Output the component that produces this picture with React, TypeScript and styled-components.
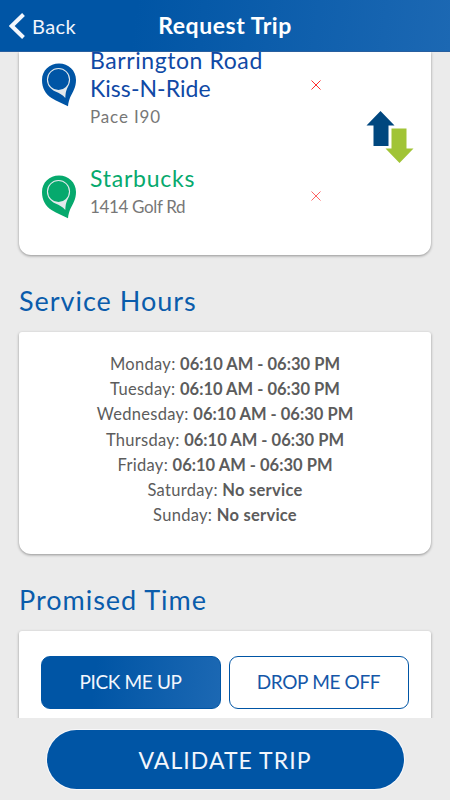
import React from 'react';
import styled, { createGlobalStyle } from 'styled-components';

const GlobalStyle = createGlobalStyle`
  * { box-sizing: border-box; }
  body { margin: 0; background: #ebebeb; }
`;

const Screen = styled.div`
  display: flex;
  flex-direction: column;
  width: 450px;
  height: 800px;
  overflow: hidden;
  background: #ebebeb;
  font-family: Lato, 'Open Sans', sans-serif;
`;

const Header = styled.header`
  display: grid;
  grid-template-columns: 1fr auto 1fr;
  align-items: center;
  flex: none;
  height: 52px;
  padding: 1px 9px 0;
  color: #fff;
  background: linear-gradient(97deg, #0055a5 30%, #1c68b3 100%);
  border-bottom: 1px solid #285f9f;
`;

const BackButton = styled.button`
  display: flex;
  align-items: center;
  gap: 6px;
  padding: 0;
  border: 0;
  background: none;
  color: #f1f5fc;
  font: inherit;
  font-size: 20px;
  letter-spacing: 0.45px;
`;

const Title = styled.h1`
  margin: -2px 0 0;
  font-size: 23px;
  font-weight: 700;
  line-height: 28px;
  letter-spacing: 0.55px;
`;

const Content = styled.main`
  display: flex;
  flex-direction: column;
  flex: none;
  height: 666px;
  padding: 0 19px;
  overflow: hidden;
`;

const Card = styled.section<{ $height: number; $continued?: boolean }>`
  flex: none;
  height: ${(p) => p.$height}px;
  background: #fff;
  border-radius: ${(p) => (p.$continued ? '0 0 12px 12px' : '3px 3px 12px 12px')};
  box-shadow: 0 1px 3px rgba(0, 0, 0, 0.38);
`;

const TripCard = styled(Card)`
  display: grid;
  grid-template-columns: 1fr 84px;
`;

const Stops = styled.div`
  display: flex;
  flex-direction: column;
`;

const Stop = styled.div<{ $height: number; $offset: number }>`
  display: grid;
  grid-template-columns: 35px 208px 24px;
  column-gap: 13px;
  align-items: start;
  height: ${(p) => p.$height}px;
  margin-top: ${(p) => p.$offset}px;
  padding-left: 23px;
`;

const IconSlot = styled.span<{ $top: number }>`
  display: flex;
  padding-top: ${(p) => p.$top}px;
`;

const StopName = styled.div<{ $color: string; $spacing?: number }>`
  color: ${(p) => p.$color};
  font-size: 23px;
  line-height: 28px;
  white-space: nowrap;
  letter-spacing: ${(p) => p.$spacing ?? 0.75}px;
`;

const StopAddress = styled.div<{ $spacing: number }>`
  padding-top: 1px;
  color: #777;
  font-size: 17px;
  line-height: 27px;
  letter-spacing: ${(p) => p.$spacing}px;
`;

const SwapButton = styled.button`
  align-self: start;
  justify-self: start;
  display: flex;
  margin: 58px 0 0 19px;
  padding: 0;
  border: 0;
  background: none;
`;

const Heading = styled.h2`
  flex: none;
  margin: 0;
  height: 77px;
  padding-top: 30px;
  color: #0a5cab;
  font-size: 27px;
  font-weight: 400;
  line-height: 32px;
  letter-spacing: 0.98px;
`;

const HoursCard = styled(Card)`
  display: flex;
  flex-direction: column;
  align-items: center;
  padding-top: 20px;
`;

const HoursRow = styled.div<{ $closed: boolean }>`
  color: #5c5c5c;
  font-size: 16.5px;
  line-height: 25.2px;
  white-space: nowrap;
  letter-spacing: 0.3px;

  strong {
    font-weight: 700;
    letter-spacing: ${(p) => (p.$closed ? 0.25 : 0.02)}px;
  }
`;

const TimeCard = styled(Card)`
  display: grid;
  grid-template-columns: 180px 180px;
  column-gap: 8px;
  align-content: start;
  padding: 25px 22px;
`;

const ModeButton = styled.button<{ $active?: boolean }>`
  height: 53px;
  padding: 0 1px 2px 0;
  border: 1px solid #0055a5;
  border-radius: 9px;
  color: ${(p) => (p.$active ? '#f3f7fd' : '#1557a8')};
  background: ${(p) => (p.$active ? 'linear-gradient(97deg, #0055a5 30%, #1c68b3 100%)' : '#fff')};
  font: inherit;
  font-size: 19px;
  letter-spacing: -0.35px;
`;

const Footer = styled.footer`
  display: flex;
  flex: 1;
  justify-content: center;
  align-items: flex-start;
  padding-top: 12px;
`;

const SubmitButton = styled.button`
  width: 357px;
  height: 59px;
  padding: 0;
  border: 0;
  border-radius: 30px;
  box-shadow: 0 0 0 1px #f8f8fa;
  background: #0055a5;
  color: #f3f7fd;
  font: inherit;
  font-size: 23px;
  letter-spacing: 1.05px;
`;

const BackIcon = () => (
  <svg width="17" height="26" viewBox="0 0 17 26" fill="none">
    <path d="M14.500 1.500 2.700 13l11.800 11.500" stroke="#f3f7fd" strokeWidth="4" />
  </svg>
);

const Pin = ({ color }: { color: string }) => (
  <svg width="35" height="44" viewBox="0 0 35 44">
    <path
      d="M17 .5C7.500 .5 0 7.500 0 17c0 8 3.500 14 9.500 18 5 3.300 11 5.500 16.500 8.300.3-3.300 1-6 2.200-9C31 29 34 24 34 17 34 7.500 26.500 .5 17 .5Z"
      fill={color}
    />
    <path
      d="M16.500 5A11.600 11.600 0 0 0 4.900 16.600c0 6 4 9.900 8.600 12 4 1.800 7 3.400 9.800 6.300.2-3.800.5-6.400 1.800-9.300 1.500-3.200 3-5.200 3-9A11.600 11.600 0 0 0 16.500 5Z"
      fill="#e3e9ec"
    />
    <path
      d="M16.500 6A10.500 10.500 0 1 0 16.500 27A10.500 10.500 0 1 0 16.500 6Z"
      fill={color}
    />
  </svg>
);

const RemoveIcon = ({ opacity }: { opacity: number }) => (
  <svg width="10" height="10" viewBox="0 0 10 10">
    <path d="m.5 .5 9 9m0-9-9 9" stroke="#f22" strokeOpacity={opacity} fill="none" />
  </svg>
);

const SwapIcon = () => (
  <svg width="48" height="53" viewBox="0 0 48 53">
    <path d="M14.500 1 28.500 15.500h-6V36h-15V15.500h-7Z" fill="#00477f" />
    <path d="M25.500 18.500h15V38.500h7L33.500 53 19.500 38.500h6Z" fill="#a1c436" />
  </svg>
);

const hours: [string, string][] = [
  ['Monday', '06:10 AM - 06:30 PM'],
  ['Tuesday', '06:10 AM - 06:30 PM'],
  ['Wednesday', '06:10 AM - 06:30 PM'],
  ['Thursday', '06:10 AM - 06:30 PM'],
  ['Friday', '06:10 AM - 06:30 PM'],
  ['Saturday', 'No service'],
  ['Sunday', 'No service'],
];

export default function App() {
  return (
    <>
      <GlobalStyle />
      <Screen>
        <Header>
          <BackButton>
            <BackIcon />
            Back
          </BackButton>
          <Title>Request Trip</Title>
        </Header>
        <Content>
          <TripCard $height={203} $continued>
            <Stops>
              <Stop $height={118} $offset={-6}>
                <IconSlot $top={17}>
                  <Pin color="#0055a5" />
                </IconSlot>
                <div>
                  <StopName $color="#1049a5" $spacing={0.58}>Barrington Road</StopName>
                  <StopName $color="#1049a5" $spacing={0.05}>Kiss-N-Ride</StopName>
                  <StopAddress $spacing={0.85}>Pace I90</StopAddress>
                </div>
                <IconSlot $top={34}>
                  <RemoveIcon opacity={0.95} />
                </IconSlot>
              </Stop>
              <Stop $height={90} $offset={0}>
                <IconSlot $top={11}>
                  <Pin color="#06a96d" />
                </IconSlot>
                <div>
                  <StopName $color="#06a96d">Starbucks</StopName>
                  <StopAddress $spacing={-0.35}>1414 Golf Rd</StopAddress>
                </div>
                <IconSlot $top={27}>
                  <RemoveIcon opacity={0.7} />
                </IconSlot>
              </Stop>
            </Stops>
            <SwapButton aria-label="Swap stops">
              <SwapIcon />
            </SwapButton>
          </TripCard>
          <Heading>Service Hours</Heading>
          <HoursCard $height={222}>
            {hours.map(([day, time]) => (
              <HoursRow key={day} $closed={time === 'No service'}>
                {day}: <strong>{time}</strong>
              </HoursRow>
            ))}
          </HoursCard>
          <Heading>Promised Time</Heading>
          <TimeCard $height={180}>
            <ModeButton $active>PICK ME UP</ModeButton>
            <ModeButton>DROP ME OFF</ModeButton>
          </TimeCard>
        </Content>
        <Footer>
          <SubmitButton>VALIDATE TRIP</SubmitButton>
        </Footer>
      </Screen>
    </>
  );
}
